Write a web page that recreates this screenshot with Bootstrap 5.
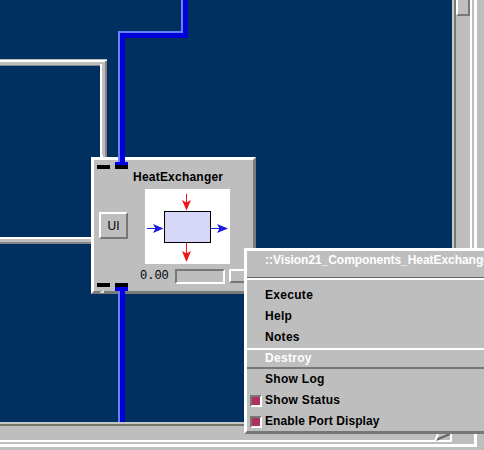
<!DOCTYPE html>
<html lang="en">
<head>
<meta charset="utf-8">
<title>Network Editor</title>
<link href="https://cdn.jsdelivr.net/npm/bootstrap@5.3.0/dist/css/bootstrap.min.css" rel="stylesheet">
<style>
body{width:484px;height:450px;background:#bebebe;font:12px/15px "Liberation Sans",Arial,sans-serif;color:#000}
.frame{width:477px;height:447px;border:solid #fff;border-width:0 3px 3px 0}
.workspace{width:452px;height:422px;background:#003060}
.vbar{width:20px;border-left:2px solid #c8ccd0;border-right:2px solid #fff}
.vtrough{border-left:2px solid #777;width:100%}
.vthumb{width:14px;height:16px;border:2px solid #777;border-left-color:#fff;border-top:0}
.hbar{width:452px;height:20px;border-top:2px solid #c5c5c5;border-bottom:2px solid #fff}
.htrough{border-top:2px solid #777468;height:16px}
.node{left:91px;top:157px;width:165px;height:137px;background:#bebebe;border:3px solid;border-color:#fff #7b7b7b #7b7b7b #fff}
.node-title{font-weight:700;height:29px;padding:10px 0 0 39px;letter-spacing:.22px}
.ui-btn{width:29px;height:27px;margin:23px 0 0 5px;padding:0;border:2px solid;border-color:#fff #777 #777 #fff;border-radius:0;background:#bebebe;font-size:12px;line-height:22px;color:#000}
.glyph-box{width:85px;height:75px;margin-left:17px;background:#fff}
.status{padding-left:46px;height:24px}
.value{width:35px;font:12px/15px "Liberation Mono",monospace}
.gauge{width:50px;height:15px;border:2px solid;border-color:#777 #fff #fff #777}
.knob{width:20px;height:14px;margin-left:4px;border:2px solid;border-color:#fff #777 #777 #fff}
.popup{left:244px;top:248px;width:260px;height:186px;background:#bebebe;border:3px solid;border-color:#fff #777 #777 #fff;border-radius:0;padding:0;font-weight:700;letter-spacing:.3px;white-space:nowrap}
.popup-title{height:27px;padding:2px 0 0 18px;color:#fff;border-bottom:1px solid #666;letter-spacing:-.05px}
.popup-rule{height:6px;border-top:2px solid #fff;margin-bottom:1px}
.item{height:21px;padding-left:3px;line-height:21px}
.item.active-item{color:#fff;border:solid;border-width:2px 0;border-color:#fff #777 #777 #fff;line-height:17px}
.tight{letter-spacing:.1px}
.tick{width:12px;height:12px;margin-right:3px;border:2px solid transparent;flex:none}
.tick.on{background:#b03060;border-color:#777 #fff #fff #777}
</style>
<script src="https://cdn.jsdelivr.net/npm/bootstrap@5.3.0/dist/js/bootstrap.bundle.min.js"></script>
</head>
<body class="m-0 overflow-hidden position-relative">
<main class="frame d-flex flex-column">
  <div class="d-flex">
    <div class="workspace">
      <svg class="d-block" width="452" height="422" shape-rendering="crispEdges" fill="none">
        <path d="M0 62.500H103.500V160" stroke="#bebebe" stroke-width="7"/>
        <path d="M0 60.500H107M101 64V158" stroke="#fff" stroke-width="2"/>
        <path d="M0 65.500H100M106 61V158" stroke="#858585" stroke-width="1.500"/>
        <path d="M0 240.500H92" stroke="#bebebe" stroke-width="7"/>
        <path d="M0 238H92" stroke="#fff" stroke-width="2"/>
        <path d="M0 243H92" stroke="#858585" stroke-width="2"/>
        <path d="M184.500 0V34.500H121.500V160M121.500 292V422" stroke="#0000d8" stroke-width="7"/>
        <path d="M182 0V32H119V160M119 294V422" stroke="#6680ff" stroke-width="2"/>
      </svg>
    </div>
    <div class="vbar"><div class="vtrough h-100"><div class="vthumb"></div></div></div>
  </div>
  <div class="hbar"><div class="htrough d-flex justify-content-end">
    <svg width="18" height="16"><path d="M2 14L16 8" stroke="#666" stroke-width="2"/><path d="M1 15L4 8M17 8V16" stroke="#fff" stroke-width="2"/></svg>
  </div></div>
</main>

<section class="node position-absolute">
  <div class="node-title">HeatExchanger</div>
  <div class="d-flex">
    <button class="ui-btn btn">UI</button>
    <div class="glyph-box">
      <svg class="d-block" width="85" height="75">
        <rect x="19.500" y="22.500" width="46" height="31" fill="#d6d6f8" stroke="#000"/>
        <g stroke="#1a1ae0" fill="#1a1ae0"><path d="M2 39.500H15M66 39.500H78"/><path stroke="none" d="M18.500 39.500L8 35L10.500 39.500L8 44ZM83 39.500L72 35L74.500 39.500L72 44Z"/></g>
        <g stroke="#ee1515" fill="#ee1515"><path d="M41.500 5V18M41.500 54V68"/><path stroke="none" d="M41.500 21.500L37 11L41.500 13.500L46 11ZM41.500 73L37 62L41.500 64.500L46 62Z"/></g>
      </svg>
    </div>
  </div>
  <div class="status d-flex align-items-center"><span class="value">0.00</span><div class="gauge"></div><div class="knob"></div></div>
</section>
<svg class="position-absolute top-0 start-0" width="244" height="300" shape-rendering="crispEdges">
  <path d="M118 155H125V162H128V166H115V162H118ZM115 286H128V291H125V300H118V291H115Z" fill="#0000e8"/>
  <path d="M118 155H120V162H118ZM118 291H120V300H118Z" fill="#6680ff"/>
  <path d="M101 155H103V160H101Z" fill="#fff"/>
  <path d="M97 165H110V169H97ZM115 165H128V169H115ZM97 283H110V287H97ZM115 283H128V287H115Z"/>
  <path d="M94 293L99 293L104 290V293Z" fill="#ddd"/>
</svg>

<nav class="popup position-absolute">
  <div class="popup-title overflow-hidden">::Vision21_Components_HeatExchanger</div>
  <div class="popup-rule"></div>
  <div class="item d-flex align-items-center"><i class="tick"></i>Execute</div>
  <div class="item d-flex align-items-center"><i class="tick"></i>Help</div>
  <div class="item d-flex align-items-center"><i class="tick"></i>Notes</div>
  <div class="item active-item d-flex align-items-center"><i class="tick"></i>Destroy</div>
  <div class="item d-flex align-items-center"><i class="tick"></i>Show Log</div>
  <div class="item d-flex align-items-center"><i class="tick on"></i>Show Status</div>
  <div class="item tight d-flex align-items-center"><i class="tick on"></i>Enable Port Display</div>
</nav>
</body>
</html>
